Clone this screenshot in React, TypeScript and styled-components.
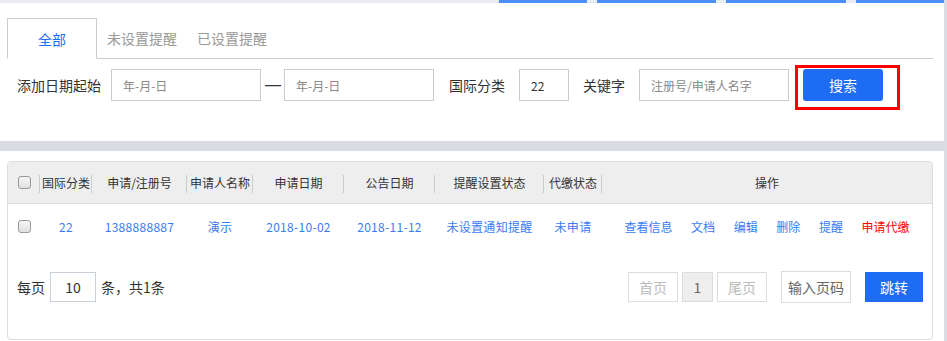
import React from "react";
import styled, { createGlobalStyle } from "styled-components";

const GlobalStyle = createGlobalStyle`
  html, body { margin: 0; padding: 0; background: #fff; }
  body { font-family: "Noto Sans CJK SC", "Noto Sans", sans-serif; color: #333; }
  * { box-sizing: border-box; }
`;

const BLUE = "#1d6cf2";
const LINK = "#3a7bf2";

const Page = styled.div`
  display: flex;
  width: 947px;
  height: 341px;
  overflow: hidden;
`;

const Main = styled.div`
  display: flex;
  flex-direction: column;
  width: 944px;
`;

const RightRail = styled.div`
  width: 3px;
  background: #d9dde3;
`;

const TopStrip = styled.div`
  display: flex;
  gap: 10px;
  height: 3px;
  padding-left: 499px;
  background: #e8ebef;
`;

const StripSeg = styled.div<{ $w: number }>`
  width: ${(p) => p.$w}px;
  background: #4d8ef8;
`;

const TopPanel = styled.div`
  height: 138px;
  padding: 15px 11px 0 7px;
  background: #fff;
`;

const Tabs = styled.div`
  display: flex;
  height: 41px;
  border-bottom: 1px solid #ccc;
`;

const Tab = styled.div<{ $active?: boolean }>`
  display: flex;
  align-items: center;
  justify-content: center;
  height: 41px;
  font-size: 14px;
  line-height: 20px;
  color: ${(p) => (p.$active ? BLUE : "#999")};
  ${(p) =>
    p.$active
      ? `width: 90px; border: 1px solid #ccc; border-bottom: 1px solid #fff; background: #fff;`
      : `padding: 0 10px 1px;`}
`;

const FormRow = styled.div`
  display: flex;
  align-items: center;
  height: 32px;
  margin-top: 10px;
  padding-left: 10px;
`;

const Label = styled.span<{ $ml?: number }>`
  margin-left: ${(p) => p.$ml ?? 0}px;
  font-size: 14px;
  line-height: 20px;
  color: #333;
  white-space: nowrap;
`;

const Field = styled.input<{ $w: number; $ml: number }>`
  width: ${(p) => p.$w}px;
  height: 32px;
  margin-left: ${(p) => p.$ml}px;
  padding: 0 0 0 11px;
  border: 1px solid #ccc;
  border-radius: 0;
  outline: none;
  font-family: inherit;
  font-size: 12px;
  color: #333;
  background: #fff;
  &::placeholder { color: #888; opacity: 1; }
`;

const Dash = styled.span`
  width: 16px;
  margin: 0 3px 0 4px;
  text-align: center;
  font-family: "Liberation Sans", sans-serif;
  font-size: 16px;
  color: #333;
`;

const Annotation = styled.div`
  display: flex;
  margin: -4px 0 -9px 6px;
  padding: 1px 14px 6px 5px;
  border: 3px solid #f00;
`;

const PrimaryButton = styled.button<{ $w: number; $h: number; $radius?: number; $ml?: number }>`
  width: ${(p) => p.$w}px;
  height: ${(p) => p.$h}px;
  margin-left: ${(p) => p.$ml ?? 0}px;
  padding: 0;
  border: none;
  border-radius: ${(p) => p.$radius ?? 0}px;
  background: ${BLUE};
  color: #fff;
  font-family: inherit;
  font-size: 14px;
`;

const GrayBand = styled.div`
  height: 10px;
  background: #d9dde3;
`;

const BottomPanel = styled.div`
  flex: 1;
  padding: 10px 11px 0 7px;
  background: #fff;
`;

const Card = styled.div`
  width: 926px;
  border: 1px solid #ddd;
  border-radius: 4px;
  background: #fff;
`;

const COLS = "32px 52px 95px 66px 91px 91px 109px 58px 1fr";

const HeadRow = styled.div`
  display: grid;
  grid-template-columns: ${COLS};
  height: 42px;
  border-bottom: 1px solid #ddd;
  border-radius: 4px 4px 0 0;
  background: #eee;
`;

const HeadCell = styled.div<{ $sep?: boolean }>`
  position: relative;
  display: flex;
  align-items: center;
  justify-content: center;
  font-size: 12px;
  color: #333;
  white-space: nowrap;
  ${(p) =>
    p.$sep
      ? `&::after { content: ""; position: absolute; right: 0; top: 13px; width: 1px; height: 18px; background: #ccc; }`
      : ""}
`;

const DataRow = styled.div`
  display: grid;
  grid-template-columns: ${COLS};
  height: 45px;
`;

const Cell = styled.div`
  display: flex;
  align-items: center;
  justify-content: center;
  font-size: 12px;
  letter-spacing: 0.3px;
  color: ${LINK};
  white-space: nowrap;
`;

const Actions = styled.div`
  display: flex;
  align-items: center;
  justify-content: center;
  gap: 18.6px;
`;

const ActionLink = styled.a<{ $danger?: boolean }>`
  font-size: 12px;
  color: ${(p) => (p.$danger ? "#f00" : LINK)};
  text-decoration: none;
  cursor: pointer;
`;

const Check = styled.input.attrs({ type: "checkbox" })`
  appearance: none;
  width: 13px;
  height: 13px;
  margin: 0;
  border: 1px solid #999;
  border-radius: 3px;
  background: linear-gradient(#f6f6f6, #e0e0e0);
`;

const Pager = styled.div`
  display: flex;
  align-items: center;
  padding: 22px 9px 36px;
`;

const PagerText = styled.span<{ $ml?: number }>`
  margin-left: ${(p) => p.$ml ?? 0}px;
  font-size: 14px;
  color: #333;
`;

const SizeBox = styled.div`
  display: flex;
  align-items: center;
  justify-content: center;
  width: 46px;
  height: 30px;
  margin-left: 5px;
  border: 1px solid #c8d0da;
  font-size: 14px;
  color: #333;
`;

const Spacer = styled.div`
  flex: 1;
`;

const PageBtn = styled.div<{ $w: number; $ml: number; $current?: boolean; $disabled?: boolean; $h?: number }>`
  display: flex;
  align-items: center;
  justify-content: center;
  width: ${(p) => p.$w}px;
  height: ${(p) => p.$h ?? 30}px;
  margin-left: ${(p) => p.$ml}px;
  border: 1px solid #ddd;
  background: ${(p) => (p.$current ? "#eee" : "#fff")};
  font-size: 14px;
  color: ${(p) => (p.$disabled ? "#bbb" : "#666")};
`;

const headers = ["国际分类", "申请/注册号", "申请人名称", "申请日期", "公告日期", "提醒设置状态", "代缴状态"];
const row = ["22", "1388888887", "演示", "2018-10-02", "2018-11-12", "未设置通知提醒", "未申请"];
const actions = ["查看信息", "文档", "编辑", "删除", "提醒"];

export default function App() {
  return (
    <>
      <GlobalStyle />
      <Page>
        <Main>
          <TopStrip>
            {[88, 119, 120, 88].map((w, i) => (
              <StripSeg key={i} $w={w} />
            ))}
          </TopStrip>
          <TopPanel>
            <Tabs>
              <Tab $active>全部</Tab>
              <Tab>未设置提醒</Tab>
              <Tab>已设置提醒</Tab>
            </Tabs>
            <FormRow>
              <Label>添加日期起始</Label>
              <Field $w={150} $ml={10} placeholder="年-月-日" />
              <Dash>—</Dash>
              <Field $w={150} $ml={0} placeholder="年-月-日" />
              <Label $ml={15}>国际分类</Label>
              <Field $w={50} $ml={14} defaultValue="22" />
              <Label $ml={14}>关键字</Label>
              <Field $w={150} $ml={14} placeholder="注册号/申请人名字" />
              <Annotation>
                <PrimaryButton $w={80} $h={32} $radius={3}>搜索</PrimaryButton>
              </Annotation>
            </FormRow>
          </TopPanel>
          <GrayBand />
          <BottomPanel>
            <Card>
              <HeadRow>
                <HeadCell $sep>
                  <Check />
                </HeadCell>
                {headers.map((h) => (
                  <HeadCell key={h} $sep>
                    {h}
                  </HeadCell>
                ))}
                <HeadCell>操作</HeadCell>
              </HeadRow>
              <DataRow>
                <Cell>
                  <Check />
                </Cell>
                {row.map((v) => (
                  <Cell key={v}>{v}</Cell>
                ))}
                <Actions>
                  {actions.map((a) => (
                    <ActionLink key={a}>{a}</ActionLink>
                  ))}
                  <ActionLink $danger>申请代缴</ActionLink>
                </Actions>
              </DataRow>
              <Pager>
                <PagerText>每页</PagerText>
                <SizeBox>10</SizeBox>
                <PagerText $ml={5}>条，共1条</PagerText>
                <Spacer />
                <PageBtn $w={50} $ml={0} $disabled>首页</PageBtn>
                <PageBtn $w={31} $ml={4} $current>1</PageBtn>
                <PageBtn $w={50} $ml={4} $disabled>尾页</PageBtn>
                <PageBtn $w={70} $ml={14} $h={32}>输入页码</PageBtn>
                <PrimaryButton $w={58} $h={30} $ml={14}>跳转</PrimaryButton>
              </Pager>
            </Card>
          </BottomPanel>
        </Main>
        <RightRail />
      </Page>
    </>
  );
}
